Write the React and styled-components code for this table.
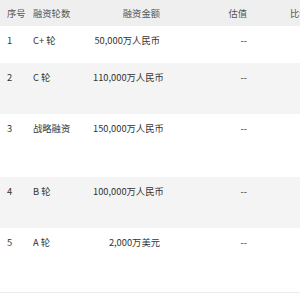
import styled, { createGlobalStyle } from 'styled-components'

const GlobalStyle = createGlobalStyle`
  html, body {
    margin: 0;
    padding: 0;
    background: #ffffff;
    overflow: hidden;
  }
`

const Wrapper = styled.div`
  width: 300px;
  height: 300px;
  overflow: hidden;
  font-family: "Noto Sans CJK SC", "Noto Sans", sans-serif;
  font-size: 9.3px;
  color: #333333;
`

const Table = styled.table`
  width: 420px;
  table-layout: fixed;
  border-collapse: collapse;
  border-bottom: 1px solid #ebebeb;
`

const HeadCell = styled.th`
  height: 26px;
  padding: 0 7px;
  background: #efefef;
  color: #555555;
  font-weight: normal;
  text-align: ${p => p.$align || 'left'};
  vertical-align: middle;
  white-space: nowrap;
  overflow: hidden;
`

const Row = styled.tr`
  height: ${p => p.$h}px;
  background: ${p => (p.$striped ? '#f4f4f4' : '#ffffff')};
`

const Cell = styled.td`
  padding: 7px 7px 0;
  line-height: 14px;
  text-align: ${p => p.$align || 'left'};
  vertical-align: top;
  white-space: nowrap;
`

const rows = [
  { no: '1', round: 'C+ 轮', amount: '50,000万人民币', h: 37 },
  { no: '2', round: 'C 轮', amount: '110,000万人民币', h: 51 },
  { no: '3', round: '战略融资', amount: '150,000万人民币', h: 63 },
  { no: '4', round: 'B 轮', amount: '100,000万人民币', h: 51 },
  { no: '5', round: 'A 轮', amount: '2,000万美元', h: 64 },
]

const App = () => {
  return (
    <Wrapper>
      <GlobalStyle />
      <Table>
        <colgroup>
          <col style={{ width: 26 }} />
          <col style={{ width: 60 }} />
          <col style={{ width: 81 }} />
          <col style={{ width: 87 }} />
          <col style={{ width: 166 }} />
        </colgroup>
        <thead>
          <tr>
            <HeadCell>序号</HeadCell>
            <HeadCell>融资轮数</HeadCell>
            <HeadCell $align="right">融资金额</HeadCell>
            <HeadCell $align="right">估值</HeadCell>
            <HeadCell style={{ paddingLeft: 36 }}>比例</HeadCell>
          </tr>
        </thead>
        <tbody>
          {rows.map((r, i) => (
            <Row key={r.no} $h={r.h} $striped={i % 2 === 1}>
              <Cell>{r.no}</Cell>
              <Cell>{r.round}</Cell>
              <Cell $align="right">{r.amount}</Cell>
              <Cell $align="right">--</Cell>
              <Cell />
            </Row>
          ))}
        </tbody>
      </Table>
    </Wrapper>
  )
}

export default App
